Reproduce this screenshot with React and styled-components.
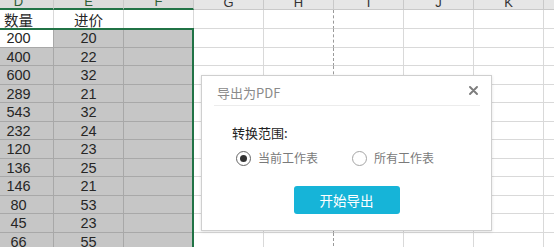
import React from "react";
import styled, { createGlobalStyle, css } from "styled-components";

const GlobalStyle = createGlobalStyle`
  html, body {
    margin: 0;
    padding: 0;
    background: #fff;
    overflow: hidden;
  }
`;

const Page = styled.div`
  position: relative;
  width: 554px;
  height: 247px;
  overflow: hidden;
  font-family: "Liberation Sans", "Noto Sans CJK SC", sans-serif;
`;

const Sheet = styled.div`
  position: relative;
  margin-left: -16px;
  width: 640px;
`;

const Row = styled.div`
  display: flex;
  height: ${(p) => p.$h}px;
`;

const HeadCell = styled.div`
  box-sizing: border-box;
  width: 70px;
  flex: none;
  height: 100%;
  overflow: hidden;
  display: flex;
  justify-content: center;
  align-items: flex-end;
  background: ${(p) => (p.$sel ? "#dcdcdc" : "#e6e6e6")};
  border-right: 1px solid #c9c9c9;
  border-bottom: ${(p) => (p.$sel ? "2px solid #217346" : "1px solid #c9c9c9")};
  color: ${(p) => (p.$sel ? "#2e5e36" : "#333")};
  font-size: 13px;
  line-height: 13px;
`;

const Cell = styled.div`
  box-sizing: border-box;
  width: 70px;
  flex: none;
  height: 100%;
  display: flex;
  align-items: center;
  justify-content: center;
  font-size: 14.5px;
  color: #262626;
  background: #fff;
  border-right: 1px solid #d9d9d9;
  border-bottom: 1px solid #d9d9d9;
  ${(p) =>
    p.$sel &&
    css`
      background: #c6c6c6;
      border-color: #a8a8a8;
    `}
  ${(p) =>
    p.$active &&
    css`
      background: #fff;
    `}
  ${(p) =>
    p.$break &&
    css`
      border-right: 1px dashed #9a9a9a;
    `}
`;

const Selection = styled.div`
  position: absolute;
  left: 0;
  top: 28px;
  width: 210px;
  height: 300px;
  box-sizing: border-box;
  border: 2px solid #217346;
  pointer-events: none;
`;

const Dialog = styled.div`
  position: absolute;
  left: 201px;
  top: 75px;
  width: 291px;
  height: 156px;
  box-sizing: border-box;
  background: #fff;
  border: 1px solid #cfcfcf;
  box-shadow: 0 1px 3px rgba(0, 0, 0, 0.12);
  font-family: "Noto Sans CJK SC", "Noto Sans", sans-serif;
  display: flex;
  flex-direction: column;
`;

const DialogHead = styled.div`
  display: flex;
  justify-content: space-between;
  align-items: center;
  height: 25px;
  padding: 4px 12px 0 15px;
`;

const Title = styled.span`
  font-size: 13px;
  line-height: 25px;
  color: #8a8a8a;
`;

const Close = styled.button`
  border: 0;
  background: none;
  padding: 0;
  margin-right: 1px;
  margin-top: -4px;
  display: flex;
  cursor: pointer;
`;

const Divider = styled.div`
  height: 1px;
  margin: 0 11px 0 12px;
  background: #ececec;
`;

const Body = styled.div`
  padding: 17px 0 0 30px;
`;

const Label = styled.div`
  font-size: 13px;
  line-height: 20px;
  color: #222;
`;

const Radios = styled.div`
  display: flex;
  align-items: center;
  gap: 34px;
  margin-top: 5px;
  padding-left: 4px;
`;

const RadioItem = styled.label`
  display: flex;
  align-items: center;
  gap: 7px;
  font-size: 12px;
  line-height: 20px;
  color: #7a7a7a;
`;

const RadioDot = styled.span`
  box-sizing: border-box;
  width: 15px;
  height: 15px;
  border-radius: 50%;
  border: 1px solid ${(p) => (p.$on ? "#666" : "#a5a5a5")};
  display: flex;
  align-items: center;
  justify-content: center;
  &::after {
    content: "";
    width: 7px;
    height: 7px;
    border-radius: 50%;
    background: ${(p) => (p.$on ? "#333" : "transparent")};
  }
`;

const Footer = styled.div`
  display: flex;
  justify-content: center;
  margin-top: 18px;
`;

const StartButton = styled.button`
  width: 106px;
  height: 28px;
  border: 0;
  border-radius: 3px;
  background: #16b4d8;
  color: #fff;
  font-family: "Noto Sans CJK SC", sans-serif;
  font-size: 13.5px;
  cursor: pointer;
`;

const columns = ["D", "E", "F", "G", "H", "I", "J", "K", "L"];
const data = [
  ["200", "20"],
  ["400", "22"],
  ["600", "32"],
  ["289", "21"],
  ["543", "32"],
  ["232", "24"],
  ["120", "23"],
  ["136", "25"],
  ["146", "21"],
  ["80", "53"],
  ["45", "23"],
  ["66", "55"],
];
const heights = [19, 19, 18, 19, 18, 19, 18, 19, 18, 19, 18, 19, 18];

export default function App() {
  const rows = [["数量", "进价"], ...data];
  return (
    <>
      <GlobalStyle />
      <Page>
        <Sheet>
          <Row $h={10}>
            {columns.map((c, i) => (
              <HeadCell key={c} $sel={i < 3}>
                <span>{c}</span>
              </HeadCell>
            ))}
          </Row>
          {rows.map((r, ri) => (
            <Row key={ri} $h={heights[ri]}>
              {columns.map((c, ci) => (
                <Cell
                  key={c}
                  $sel={ri > 0 && ci < 3}
                  $active={ri === 1 && ci === 0}
                  $break={c === "H"}
                >
                  {ci < 2 ? r[ci] : ""}
                </Cell>
              ))}
            </Row>
          ))}
          <Selection />
        </Sheet>

        <Dialog>
          <DialogHead>
            <Title>导出为PDF</Title>
            <Close aria-label="关闭">
              <svg width="9" height="9" viewBox="0 0 9 9">
                <path d="M1 1L8 8M8 1L1 8" stroke="#7d7d7d" strokeWidth="1.9" strokeLinecap="round" />
              </svg>
            </Close>
          </DialogHead>
          <Divider />
          <Body>
            <Label>转换范围:</Label>
            <Radios>
              <RadioItem>
                <RadioDot $on />
                当前工作表
              </RadioItem>
              <RadioItem>
                <RadioDot />
                所有工作表
              </RadioItem>
            </Radios>
          </Body>
          <Footer>
            <StartButton>开始导出</StartButton>
          </Footer>
        </Dialog>
      </Page>
    </>
  );
}
